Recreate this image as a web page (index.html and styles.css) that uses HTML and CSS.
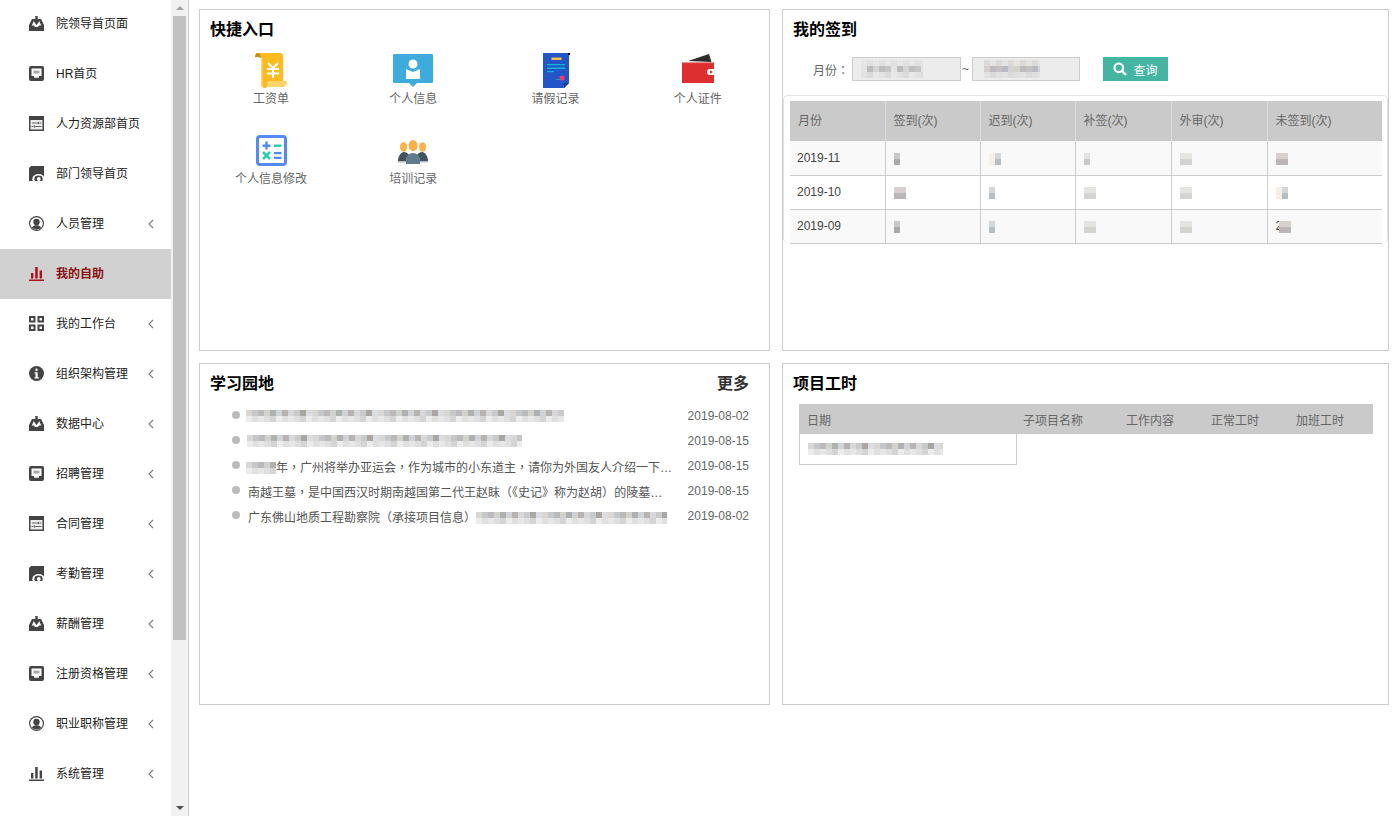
FILE: index.html
```html
<!DOCTYPE html>
<html lang="zh-CN">
<head>
<meta charset="utf-8">
<title>我的自助</title>
<link rel="stylesheet" href="styles.css">
</head>
<body>
<svg class="defs" width="0" height="0" aria-hidden="true">
  <symbol id="i-inbox" viewBox="0 0 15 15">
    <path d="M3 3h9l3 6v6H0V9z" fill="currentColor"/>
    <path d="M2.800 9.500 4.800 5h5.400l2 4.500H10l-1 1.500H6L5 9.500z" fill="#fff"/>
    <path d="M6.300 0h2.400v5h1.800L7.500 9 4.500 5h1.800z" fill="currentColor"/>
  </symbol>
  <symbol id="i-screen" viewBox="0 0 15 15">
    <rect width="15" height="15" rx="2" fill="currentColor"/>
    <path d="M2.500 2.500h10v7.500h-2.500v1.800H5V10H2.500z" fill="#fff"/>
    <path d="M4.500 4.500h6v3h-6z" fill="#aaa"/>
  </symbol>
  <symbol id="i-slider" viewBox="0 0 15 15">
    <path d="M0 0h15v15H0z" fill="currentColor"/>
    <path d="M1.500 4h12v9.500h-12z" fill="#eee"/>
    <path d="M3 6.500h6v1H3zM11 6.500h1.500v1H11zM9 5.500l2 1.500-2 1.500zM2.500 10h1.500v1H2.500zM6 10h6.500v1H6zM6 9l-2 1.500L6 12z" fill="#666"/>
  </symbol>
  <symbol id="i-eye" viewBox="0 0 15 15">
    <path d="M2 0h13v15H0V2z" fill="currentColor"/>
    <ellipse cx="9.500" cy="13" rx="6.200" ry="5" fill="#fff"/>
    <ellipse cx="9.500" cy="13" rx="4.200" ry="3.400" fill="currentColor"/>
    <circle cx="9.800" cy="13" r="1.900" fill="#fff"/>
  </symbol>
  <symbol id="i-user" viewBox="0 0 15 15">
    <circle cx="7.500" cy="7.500" r="7.500" fill="currentColor"/>
    <circle cx="7.500" cy="7.500" r="6.300" fill="#fff"/>
    <circle cx="7.500" cy="6" r="3.200" fill="currentColor"/>
    <path d="M2.800 11.500C4 9.700 5.500 9.200 7.500 9.200s3.500.5 4.700 2.300a6.300 6.300 0 0 1-9.400 0z" fill="currentColor"/>
  </symbol>
  <symbol id="i-bars" viewBox="0 0 15 15">
    <path d="M0 13.500h15V15H0zM2 7h2.400v5.500H2zM6.200 1h2.500v11.500H6.200zM10.600 4.500H13v8h-2.400z" fill="currentColor"/>
  </symbol>
  <symbol id="i-grid" viewBox="0 0 15 15">
    <path fill-rule="evenodd" d="M0 0h6.500v6.500H0zM2 2v2.500h2.500V2zM8.500 0H15v6.500H8.500zM10.500 2v2.500H13V2zM0 8.500h6.500V15H0zM2 10.500V13h2.500v-2.500zM8.500 8.500H15V15H8.500zM10.500 10.500V13H13v-2.500z" fill="currentColor"/>
  </symbol>
  <symbol id="i-info" viewBox="0 0 15 15">
    <circle cx="7.500" cy="7.500" r="7.500" fill="currentColor"/>
    <rect x="6.300" y="2.500" width="2.400" height="2.400" rx="1" fill="#fff"/>
    <path d="M5.500 6.200h3.200v5h1.100v1.300H5.500v-1.300h1v-3.700h-1z" fill="#fff"/>
  </symbol>
  <symbol id="i-chev" viewBox="0 0 6 10">
    <path d="M5 1 1 5l4 4" fill="none" stroke="currentColor" stroke-width="1.200"/>
  </symbol>
</svg>

<div class="app">
  <nav class="sidebar">
    <ul class="menu">
      <li class="item"><svg class="ico"><use href="#i-inbox"/></svg><span class="label">院领导首页面</span></li>
      <li class="item"><svg class="ico"><use href="#i-screen"/></svg><span class="label">HR首页</span></li>
      <li class="item"><svg class="ico"><use href="#i-slider"/></svg><span class="label">人力资源部首页</span></li>
      <li class="item"><svg class="ico"><use href="#i-eye"/></svg><span class="label">部门领导首页</span></li>
      <li class="item"><svg class="ico"><use href="#i-user"/></svg><span class="label">人员管理</span><svg class="chev"><use href="#i-chev"/></svg></li>
      <li class="item active"><svg class="ico"><use href="#i-bars"/></svg><span class="label">我的自助</span></li>
      <li class="item"><svg class="ico"><use href="#i-grid"/></svg><span class="label">我的工作台</span><svg class="chev"><use href="#i-chev"/></svg></li>
      <li class="item"><svg class="ico"><use href="#i-info"/></svg><span class="label">组织架构管理</span><svg class="chev"><use href="#i-chev"/></svg></li>
      <li class="item"><svg class="ico"><use href="#i-inbox"/></svg><span class="label">数据中心</span><svg class="chev"><use href="#i-chev"/></svg></li>
      <li class="item"><svg class="ico"><use href="#i-screen"/></svg><span class="label">招聘管理</span><svg class="chev"><use href="#i-chev"/></svg></li>
      <li class="item"><svg class="ico"><use href="#i-slider"/></svg><span class="label">合同管理</span><svg class="chev"><use href="#i-chev"/></svg></li>
      <li class="item"><svg class="ico"><use href="#i-eye"/></svg><span class="label">考勤管理</span><svg class="chev"><use href="#i-chev"/></svg></li>
      <li class="item"><svg class="ico"><use href="#i-inbox"/></svg><span class="label">薪酬管理</span><svg class="chev"><use href="#i-chev"/></svg></li>
      <li class="item"><svg class="ico"><use href="#i-screen"/></svg><span class="label">注册资格管理</span><svg class="chev"><use href="#i-chev"/></svg></li>
      <li class="item"><svg class="ico"><use href="#i-user"/></svg><span class="label">职业职称管理</span><svg class="chev"><use href="#i-chev"/></svg></li>
      <li class="item"><svg class="ico"><use href="#i-bars"/></svg><span class="label">系统管理</span><svg class="chev"><use href="#i-chev"/></svg></li>
    </ul>
  </nav>
  <div class="scrollbar">
    <div class="sb-btn"><span class="arrow-up"></span></div>
    <div class="sb-track"><div class="sb-thumb"></div></div>
    <div class="sb-btn"><span class="arrow-down"></span></div>
  </div>

  <main class="main">
    <section class="panel">
      <h2 class="panel-title">快捷入口</h2>
      <div class="quick">
        <a class="quick-item">
          <svg class="quick-ico ico-scroll" viewBox="0 0 32 35"><path d="M2 0h23c2 0 3 1 3 3v26H13c0 3-.5 6-3 6-2.500 0-4-2-4-5V5C6 2 4.500 0 2 0z" fill="#fdbb1f"/><path d="M0 4.500C0 1.500 1 0 2.500 0 5 0 6 2 6 5 4 3.800 2 3.800 0 4.500z" fill="#c98c10"/><path d="M6 5h1.500v25c0 3 1 4.500 2.500 5-2.500 0-4-2-4-5z" fill="#ffd56b"/><path d="M13.500 28H32c0 4-2 6-4 6H11c2 0 2.500-3 2.500-6z" fill="#ffd56b"/><path d="M13 10l5 5 5-5M12 16h12M12 20.500h12M18 15v10" fill="none" stroke="#fff" stroke-width="2"/></svg>
          <span class="quick-name">工资单</span>
        </a>
        <a class="quick-item">
          <svg class="quick-ico ico-card" viewBox="0 0 40 34"><path d="M1.500 0h37c1 0 1.500.5 1.500 1.500v26c0 1-.5 1.500-1.500 1.500H24l-4 4-4-4H1.500C.5 29 0 28.500 0 27.500v-26C0 .5.5 0 1.500 0z" fill="#3dacdc"/><circle cx="20" cy="10" r="4.500" fill="#fff"/><path d="M13 15l7 3 7-3v10H13z" fill="#fff"/></svg>
          <span class="quick-name">个人信息</span>
        </a>
        <a class="quick-item">
          <svg class="quick-ico ico-doc" viewBox="0 0 27 35"><path d="M0 0h26v30l-5 5H0z" fill="#2255c8"/><path d="M21 35l5-5h-4l-1 1z" fill="#16388a"/><path d="M25 0h2v2h-2z" fill="#000"/><path d="M8.500 4.500h10v2.500h-10z" fill="#f3c14b"/><path d="M4 11h18v1.300H4zM4 14.500h18v1.500H4zM4 18h7v1.200H4zM13 26h6v.800h-6z" fill="#12b5d6"/><circle cx="19" cy="25" r="2.600" fill="#ef3e6d"/></svg>
          <span class="quick-name">请假记录</span>
        </a>
        <a class="quick-item">
          <svg class="quick-ico ico-wallet" viewBox="0 0 33 35"><path d="M6 8 27 1l2.500 8z" fill="#2c2c2c"/><path d="M0 9.500h32V30H0z" fill="#dd2f2f"/><path d="M0 9.500h32v.600H0z" fill="#f08a8a"/><path d="M28 16h4v6h-4a3 3 0 0 1 0-6z" fill="#fff"/><circle cx="29" cy="19" r="1.300" fill="#dd2f2f"/></svg>
          <span class="quick-name">个人证件</span>
        </a>
        <a class="quick-item">
          <svg class="quick-ico ico-calc" viewBox="0 0 31 31"><rect x="1.500" y="1.500" width="28" height="28" rx="2.500" fill="#fff" stroke="#5589f5" stroke-width="3"/><path d="M6.500 9.500h8v2.500h-8zM9.300 6.500h2.400v8H9.300z" fill="#5589f5"/><path d="M18 9.500h7.500V12H18z" fill="#2ecdb0"/><path d="M7 17l7 7M14 17l-7 7" stroke="#2ecdb0" stroke-width="2.600"/><path d="M18 17h7.500v2.300H18zM18 21.700h7.500V24H18z" fill="#5589f5"/></svg>
          <span class="quick-name">个人信息修改</span>
        </a>
        <a class="quick-item">
          <svg class="quick-ico ico-team" viewBox="0 0 30 24"><ellipse cx="5.500" cy="7" rx="3.500" ry="4.800" fill="#fdb14d"/><ellipse cx="24.500" cy="7" rx="3.500" ry="4.800" fill="#fdb14d"/><ellipse cx="15" cy="5.500" rx="4.500" ry="5.500" fill="#fdb14d"/><path d="M0 21c0-4 2-8 5.500-9 3 0 4.500 1.500 5.500 3-2 1.500-3 3.500-3 6z" fill="#42525f"/><path d="M30 21c0-4-2-8-5.500-9-3 0-4.500 1.500-5.500 3 2 1.500 3 3.500 3 6z" fill="#42525f"/><path d="M8 24v-3c0-5 3-8 7-8s7 3 7 8v3z" fill="#5f7c8e"/><path d="M0 21h8v1.500H0zM22 21h8v1.500h-8z" fill="#b4bdc4"/></svg>
          <span class="quick-name">培训记录</span>
        </a>
      </div>
    </section>

    <section class="panel">
      <h2 class="panel-title">我的签到</h2>
      <div class="filter">
        <span class="filter-label">月份<span class="p" lang="zh-TW">：</span></span>
        <span class="fake-input"><span class="blur-field field-a"></span></span>
        <span class="tilde">~</span>
        <span class="fake-input input-b"><span class="blur-field field-b"></span></span>
        <button class="btn" type="button">
          <svg class="btn-ico" viewBox="0 0 14 14"><circle cx="5.800" cy="5.800" r="4.300" fill="none" stroke="#fff" stroke-width="2.200"/><path d="M9 9l4 4" stroke="#fff" stroke-width="2.400"/></svg>查询
        </button>
      </div>
      <div class="table-wrap">
        <table class="sign">
          <thead>
            <tr><th>月份</th><th>签到(次)</th><th>迟到(次)</th><th>补签(次)</th><th>外审(次)</th><th>未签到(次)</th></tr>
          </thead>
          <tbody>
            <tr><td>2019-11</td><td><span class="blur d1"></span></td><td><span class="blur d6"></span></td><td><span class="blur d3"></span></td><td><span class="blur d4"></span></td><td><span class="blur d5"></span></td></tr>
            <tr><td>2019-10</td><td><span class="blur d5"></span></td><td><span class="blur d2"></span></td><td><span class="blur d4"></span></td><td><span class="blur d4"></span></td><td><span class="blur d6"></span></td></tr>
            <tr><td>2019-09</td><td><span class="blur d1"></span></td><td><span class="blur d2"></span></td><td><span class="blur d4"></span></td><td><span class="blur d4"></span></td><td>2<span class="blur d5 d-tight"></span></td></tr>
          </tbody>
        </table>
      </div>
    </section>

    <section class="panel">
      <div class="title-row">
        <h2 class="panel-title">学习园地</h2>
        <span class="more">更多</span>
      </div>
      <ul class="news">
        <li class="news-item"><span class="news-title"><span class="blur bl-318"></span></span><span class="news-date">2019-08-02</span></li>
        <li class="news-item"><span class="news-title"><span class="blur bl-275"></span></span><span class="news-date">2019-08-15</span></li>
        <li class="news-item"><span class="news-title"><span class="blur bl-30"></span>年<span class="p" lang="zh-TW">，</span>广州将举办亚运会<span class="p" lang="zh-TW">，</span>作为城市的小东道主<span class="p" lang="zh-TW">，</span>请你为外国友人介绍一下…</span><span class="news-date">2019-08-15</span></li>
        <li class="news-item"><span class="news-title">南越王墓<span class="p" lang="zh-TW">，</span>是中国西汉时期南越国第二代王赵眜<span class="p" lang="zh-TW">（《</span>史记<span class="p" lang="zh-TW">》</span>称为赵胡<span class="p" lang="zh-TW">）</span>的陵墓…</span><span class="news-date">2019-08-15</span></li>
        <li class="news-item"><span class="news-title">广东佛山地质工程勘察院<span class="p" lang="zh-TW">（</span>承接项目信息<span class="p" lang="zh-TW">）</span><span class="blur bl-192"></span></span><span class="news-date">2019-08-02</span></li>
      </ul>
    </section>

    <section class="panel">
      <h2 class="panel-title">项目工时</h2>
      <div class="hours">
        <div class="hours-head"><span>日期</span><span>子项目名称</span><span>工作内容</span><span>正常工时</span><span>加班工时</span></div>
        <div class="hours-cell"><span class="blur bl-135"></span></div>
      </div>
    </section>
  </main>
</div>
</body>
</html>
```
FILE: styles.css
```css
* { box-sizing: border-box; }
html, body { margin: 0; padding: 0; background: #fff; }
body {
  font-family: "Liberation Sans", "Noto Sans CJK SC", sans-serif;
  font-size: 12px;
  color: #666;
}
.p { font-family: "Noto Sans CJK TC", sans-serif; }
.defs { display: block; height: 0; }
.app { display: flex; height: 816px; }

/* sidebar */
.sidebar { width: 171px; flex: none; height: 100%; overflow: hidden; }
.menu { list-style: none; margin: -1px 0 0; padding: 0; }
.item {
  height: 50px;
  display: flex;
  align-items: center;
  padding: 0 0 1px 29px;
  color: #444;
}
.item.active { background: #d1d1d1; color: #a30f1c; }
.ico { width: 15px; height: 15px; flex: none; margin-right: 12px; }
.label { flex: 1; color: #222; padding-bottom: 3px; }
.active .label { color: #8b0f12; font-weight: 700; }
.active .ico { color: #b0101c; }
.chev { width: 6px; height: 10px; margin: 1px 17px 0 0; color: #808080; flex: none; }

/* fake scrollbar */
.scrollbar {
  width: 18px;
  flex: none;
  height: 100%;
  background: #f1f1f1;
  border-right: 1px solid #ccc;
  display: flex;
  flex-direction: column;
}
.sb-btn { height: 16px; flex: none; display: flex; align-items: center; justify-content: center; }
.arrow-up { border: 4px solid transparent; border-top: 0; border-bottom: 4px solid #a3a3a3; }
.arrow-down { border: 4px solid transparent; border-bottom: 0; border-top: 4px solid #505050; }
.sb-track { flex: 1; padding: 0 2px; }
.sb-thumb { height: 624px; background: #c1c1c1; }

/* main */
.main {
  flex: 1;
  display: grid;
  grid-template-columns: 571px 607px;
  grid-template-rows: 342px 342px;
  column-gap: 12px;
  row-gap: 12px;
  padding: 9px 8px 0 10px;
  align-content: start;
}
.panel { border: 1px solid #ccc; min-width: 0; }
.panel-title {
  margin: 0;
  padding: 8px 0 0 10px;
  font-size: 16px;
  line-height: 24px;
  height: 32px;
  color: #000;
  font-weight: 700;
}

/* quick */
.quick { display: grid; grid-template-columns: repeat(4, 1fr); grid-auto-rows: 80px; margin-top: 11px; }
.quick-item { display: flex; flex-direction: column; align-items: center; }
.quick-ico { display: block; flex: none; }
.quick-name { margin-top: 2px; line-height: 18px; color: #666; }
.ico-scroll { width: 32px; height: 35px; }
.ico-card { width: 40px; height: 34px; margin-top: 1px; }
.ico-doc { width: 27px; height: 35px; margin-left: 2px; }
.ico-wallet { width: 33px; height: 35px; margin-left: 2px; }
.ico-calc { width: 31px; height: 31px; margin: 2px 0; }
.ico-team { width: 30px; height: 24px; margin: 7px 0 4px; }

/* filter */
.filter { display: flex; align-items: center; height: 24px; margin-top: 15px; padding-left: 30px; }
.filter-label { width: 39px; flex: none; }
.fake-input {
  width: 109px;
  height: 24px;
  flex: none;
  background: #ececec;
  border: 1px solid #ccc;
  padding: 2px 0 0 8px;
  display: block;
}
.input-b { width: 108px; }
.tilde { width: 11px; flex: none; padding-left: 1px; }
.btn {
  margin-left: 23px;
  width: 65px;
  height: 24px;
  border: 0;
  padding: 0;
  background: #44b5a2;
  color: #fff;
  font: 400 12px "Liberation Sans", "Noto Sans CJK SC", sans-serif;
  display: flex;
  align-items: center;
  justify-content: center;
}
.btn-ico { width: 14px; height: 14px; margin-right: 6px; }
.blur-field {
  display: block;
  height: 18px;
  background-repeat: no-repeat;
  background-size: 100% 6px;
  background-position: 0 0, 0 6px, 0 12px;
}
.field-a {
  width: 62px;
  background-image:
    repeating-linear-gradient(90deg, #e6e6e6 0 6px, #e0e0e0 6px 12px),
    repeating-linear-gradient(90deg, #e4e4e4 0 6px, #bdbcbc 6px 12px, #d5d5d5 12px 18px, #bfbfc0 18px 24px, #c6c6c6 24px 30px),
    repeating-linear-gradient(90deg, #e2e2e2 0 6px, #dbdbdb 6px 12px, #e8e8e8 12px 18px);
}
.field-b {
  width: 56px;
  margin-left: 3px;
  background-image:
    repeating-linear-gradient(90deg, #dcd9d7 0 6px, #e4e4e4 6px 12px),
    repeating-linear-gradient(90deg, #d5d0ce 0 6px, #bcbcc0 6px 12px, #c6c2bf 12px 18px, #b9bbc2 18px 24px, #d3d3d3 24px 30px),
    repeating-linear-gradient(90deg, #e2e2e2 0 6px, #dbdbdb 6px 12px, #e0e0e0 12px 18px);
}

/* sign table */
.table-wrap {
  margin-top: 14px;
  border: 1px solid #e3e3e3;
  border-bottom: 0;
  border-radius: 5px;
  height: 148px;
  padding: 5px 5px 0 6px;
}
.sign { border-collapse: collapse; table-layout: fixed; width: 592px; }
.sign th {
  background: #cacaca;
  font-weight: 400;
  text-align: left;
  height: 40px;
  padding: 0 8px 4px;
  color: #666;
  border-right: 1px solid #ddd;
}
.sign th:first-child { width: 95px; }
.sign th:nth-child(2), .sign th:nth-child(3) { width: 95px; }
.sign th:nth-child(4), .sign th:nth-child(5) { width: 96px; }
.sign th:last-child { border-right: 0; }
.sign td {
  height: 34px;
  padding: 0 8px;
  color: #444;
  border-bottom: 1px solid #ccc;
  border-right: 1px solid #ccc;
}
.sign td:first-child { padding-left: 7px; }
.sign td:last-child { border-right: 0; }
.sign tbody tr:nth-child(odd) td { background: #f9f9f9; }

/* news */
.title-row { display: flex; justify-content: space-between; padding-right: 20px; }
.more { font-size: 16px; font-weight: 700; line-height: 24px; padding-top: 8px; color: #333; }
.news { list-style: none; margin: 8px 0 0; padding: 0 20px 0 48px; }
.news-item {
  position: relative;
  height: 25px;
  line-height: 25px;
  display: flex;
  justify-content: space-between;
}
.news-item::before {
  content: "";
  position: absolute;
  left: -16px;
  top: 7px;
  width: 8px;
  height: 8px;
  border-radius: 50%;
  background: #bbb;
}
.news-title { width: 426px; white-space: nowrap; color: #555; }
.news-date { color: #666; }

/* project hours */
.hours { margin: 8px 15px 0 16px; }
.hours-head {
  display: grid;
  grid-template-columns: 216px 103px 85px 85px 85px;
  height: 30px;
  background: #cacaca;
  align-items: center;
  color: #666;
}
.hours-head span { padding-left: 8px; white-space: nowrap; }
.hours-cell {
  width: 218px;
  height: 31px;
  border: 1px solid #ccc;
  border-top: 0;
  padding: 8px 0 0 8px;
}

/* mosaic placeholders for redacted text */
.blur { display: inline-block; vertical-align: middle; }
.bl-318, .bl-275, .bl-192, .bl-30, .bl-135 {
  height: 12px;
  margin-top: -2px;
  background-image:
    repeating-linear-gradient(90deg, #d9d6d3 0 6px, #c4c8ca 6px 12px, #bdb9bb 12px 18px, #d2d2cc 18px 24px, #aeb1b0 24px 30px, #cfd2d6 30px 36px, #b8b3b0 36px 42px, #d8d8dc 42px 48px, #c9cacb 48px 54px, #a9a6a4 54px 60px, #dcdde2 60px 66px),
    repeating-linear-gradient(90deg, #ececec 0 6px, #e0e0de 6px 12px, #e8e6e6 12px 18px, #dddfe0 18px 24px, #d4d4d2 24px 30px);
  background-size: 100% 6px, 100% 6px;
  background-position: 0 0, 0 6px;
  background-repeat: no-repeat;
}
.bl-318 { width: 318px; margin-left: -2px; }
.bl-275 { width: 275px; margin-left: -1px; }
.bl-30 { width: 30px; margin-left: -2px; }
.bl-192 { width: 191px; }
.bl-135 { width: 135px; }
.d1, .d2, .d3, .d4, .d5, .d6 { height: 12px; background-repeat: no-repeat; }
.d1 { width: 6px; background-image: linear-gradient(#c8c8c8 0 6px, #a9aaa6 6px 12px); }
.d2 { width: 6px; background-image: linear-gradient(#d2d7da 0 6px, #b6bec4 6px 12px); }
.d3 { width: 6px; background-image: linear-gradient(#e3e3e6 0 6px, #c8c8ca 6px 12px); }
.d4 { width: 12px; background-image: linear-gradient(#e4e4e0 0 6px, #d2d4d2 6px 12px); }
.d5 { width: 12px; background-image: linear-gradient(#d8cfcf 0 6px, #bdb6b8 6px 12px); }
.d6 { width: 12px; background-image: linear-gradient(90deg, #f6efe8 0 6px, transparent 6px), linear-gradient(#d2d7da 0 6px, #b6bec4 6px 12px); }
.d-tight { margin-left: -3px; }
```
